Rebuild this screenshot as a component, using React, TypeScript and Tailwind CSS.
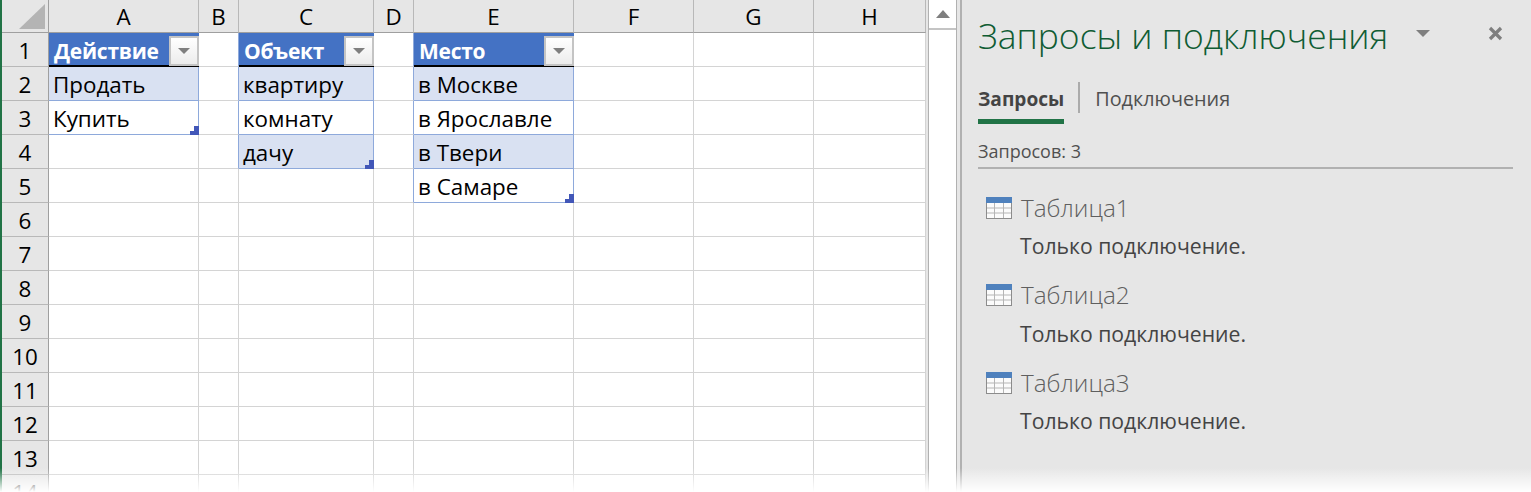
const columns = ["A", "B", "C", "D", "E", "F", "G", "H"];

// Table contents by column index
const tables: Record<number, string[]> = {
  0: ["Действие", "Продать", "Купить"],
  2: ["Объект", "квартиру", "комнату", "дачу"],
  4: ["Место", "в Москве", "в Ярославле", "в Твери", "в Самаре"],
};

const rowNumbers = Array.from({ length: 14 }, (_, i) => i + 1);

function FilterButton() {
  return (
    <div className="absolute right-0 top-[3px] flex h-[30px] w-[30px] items-center justify-center border-2 border-[#c4c4c4] bg-gradient-to-b from-white to-[#ececec]">
      <svg width="12" height="6" viewBox="0 0 12 6">
        <path d="M0 0h12L6 6z" fill="#7f7f7f" />
      </svg>
    </div>
  );
}

function ResizeHandle() {
  return (
    <svg className="absolute -bottom-px -right-px" width="9" height="9" viewBox="0 0 9 9">
      <path d="M9 0v9H0V5h4V0z" fill="#4257b8" />
    </svg>
  );
}

function Cell({ row, col }: { row: number; col: number }) {
  const table = tables[col];
  const next = tables[col + 1];
  const text = table?.[row - 1];
  const nextInTable = next && row <= next.length;

  if (text && row === 1) {
    return (
      <div className="relative flex h-[34px] items-center border-b-2 border-b-black bg-[#4472c4] pl-[5px] pt-[5px] text-[21px] font-bold tracking-[-0.25px] text-white">
        {text}
        <FilterButton />
      </div>
    );
  }

  if (text) {
    const isLast = row === table.length;
    return (
      <div
        className={`relative flex h-[34px] items-center border-r border-b border-[#8ea9db] pl-[4px] pt-[2px] text-[22.4px] text-black ${
          row % 2 === 0 ? "bg-[#d9e1f2]" : "bg-white"
        }`}
      >
        {text}
        {isLast && <ResizeHandle />}
      </div>
    );
  }

  return (
    <div
      className={`h-[34px] border-b border-b-[#d4d4d4] border-r ${
        nextInTable ? "border-r-[#8ea9db]" : "border-r-[#d4d4d4]"
      }`}
    />
  );
}

function Spreadsheet() {
  return (
    <div className="mr-[2px] grid h-[492px] w-[926px] shrink-0 grid-cols-[47px_150px_40px_135px_40px_160px_120px_120px_112px] grid-rows-[33px] content-start overflow-hidden border-l-2 border-l-[#217346] bg-white">
      <div className="flex items-start justify-end border-r border-b border-r-[#9f9f9f] border-b-[#9f9f9f] bg-[#e6e6e6] pr-[3px] pt-[4px]">
        <svg width="26" height="25" viewBox="0 0 26 25">
          <path d="M26 0v25H0z" fill="#b4b4b4" />
        </svg>
      </div>
      {columns.map((c) => (
        <div
          key={c}
          className="flex items-center justify-center border-r border-b border-r-[#b8b8b8] border-b-[#9f9f9f] bg-[#e6e6e6] pt-[2px] text-[22.4px] text-black"
        >
          {c}
        </div>
      ))}
      {rowNumbers.map((r) => (
        <div key={r} className="contents">
          <div className="flex h-[34px] items-center justify-center border-r border-b border-r-[#9f9f9f] border-b-[#b8b8b8] bg-[#e6e6e6] pt-[2px] text-[22.4px] text-black">
            {r}
          </div>
          {columns.map((c, i) => (
            <Cell key={c} row={r} col={i} />
          ))}
        </div>
      ))}
    </div>
  );
}

function Scrollbar() {
  return (
    <div className="flex h-[492px] w-[29px] shrink-0 flex-col border-x border-[#b1b1b1] bg-white">
      <div className="flex h-[30px] shrink-0 items-center justify-center border-b-2 border-[#c4c4c4]">
        <svg width="14" height="8" viewBox="0 0 14 8">
          <path d="M7 0l7 8H0z" fill="#7f7f7f" />
        </svg>
      </div>
    </div>
  );
}

function QueryItem({ name }: { name: string }) {
  return (
    <div className="flex h-[87.5px] flex-col">
      <div className="flex h-[35px] items-center">
        <svg className="ml-[8px] mr-[9px] shrink-0" width="26" height="22" viewBox="0 0 26 22">
          <rect x="0.5" y="0.5" width="25" height="21" fill="#fbfbfb" stroke="#8c8c8c" />
          <rect x="0" y="0" width="26" height="6" fill="#4f81bd" />
          <path d="M1 11h24M1 16h24M8.5 6v15M17.5 6v15" stroke="#b5b5b5" fill="none" />
        </svg>
        <span className="text-[24.3px] font-light leading-[32px] text-[#5f5f5f]">{name}</span>
      </div>
      <div className="ml-[42px] mt-[6px] text-[21.2px] leading-[30px] text-[#444444]">Только подключение.</div>
    </div>
  );
}

function QueriesPanel() {
  return (
    <div className="ml-[3px] flex h-[492px] min-w-0 flex-1 flex-col border-l-2 border-[#b1b1b1] bg-[#e6e6e6] pl-[16px] pr-[18px]">
      <div className="flex h-[72px] items-center">
        <span className="text-[35.4px] font-light leading-none text-[#0f5c33]">Запросы и подключения</span>
        <svg className="ml-[28px] mb-[5px]" width="14" height="7" viewBox="0 0 14 7">
          <path d="M0 0h14L7 7z" fill="#7f7f7f" />
        </svg>
        <svg className="ml-[58px] mb-[6px]" width="15" height="15" viewBox="0 0 15 15">
          <path d="M2 2l11 11M13 2L2 13" stroke="#7f7f7f" strokeWidth="3.2" fill="none" />
        </svg>
      </div>
      <div className="flex h-[52px] items-start pt-[10px]">
        <div className="flex h-[42px] flex-col justify-between">
          <span className="text-[19.1px] font-bold leading-[34px] text-[#444444]">Запросы</span>
          <div className="h-[5px] bg-[#217346]" />
        </div>
        <div className="ml-[14px] h-[31px] w-[2px] bg-[#ababab]" />
        <span className="ml-[15px] text-[19.8px] leading-[34px] text-[#505050]">Подключения</span>
      </div>
      <div className="flex h-[45px] items-center border-b-2 border-[#b1b1b1] pt-[11px] text-[18px] text-[#505050]">
        Запросов: 3
      </div>
      <div className="mt-[21px]">
        <QueryItem name="Таблица1" />
        <QueryItem name="Таблица2" />
        <QueryItem name="Таблица3" />
      </div>
    </div>
  );
}

export default function App() {
  return (
    <div className="relative flex h-[492px] w-[1531px] overflow-hidden bg-[#e6e6e6] font-['Open_Sans','Noto_Sans',sans-serif]">
      <Spreadsheet />
      <Scrollbar />
      <QueriesPanel />
      {/* Window fades out at the bottom edge */}
      <div className="absolute inset-x-0 bottom-0 h-[24px] bg-gradient-to-b from-white/0 to-white" />
    </div>
  );
}
